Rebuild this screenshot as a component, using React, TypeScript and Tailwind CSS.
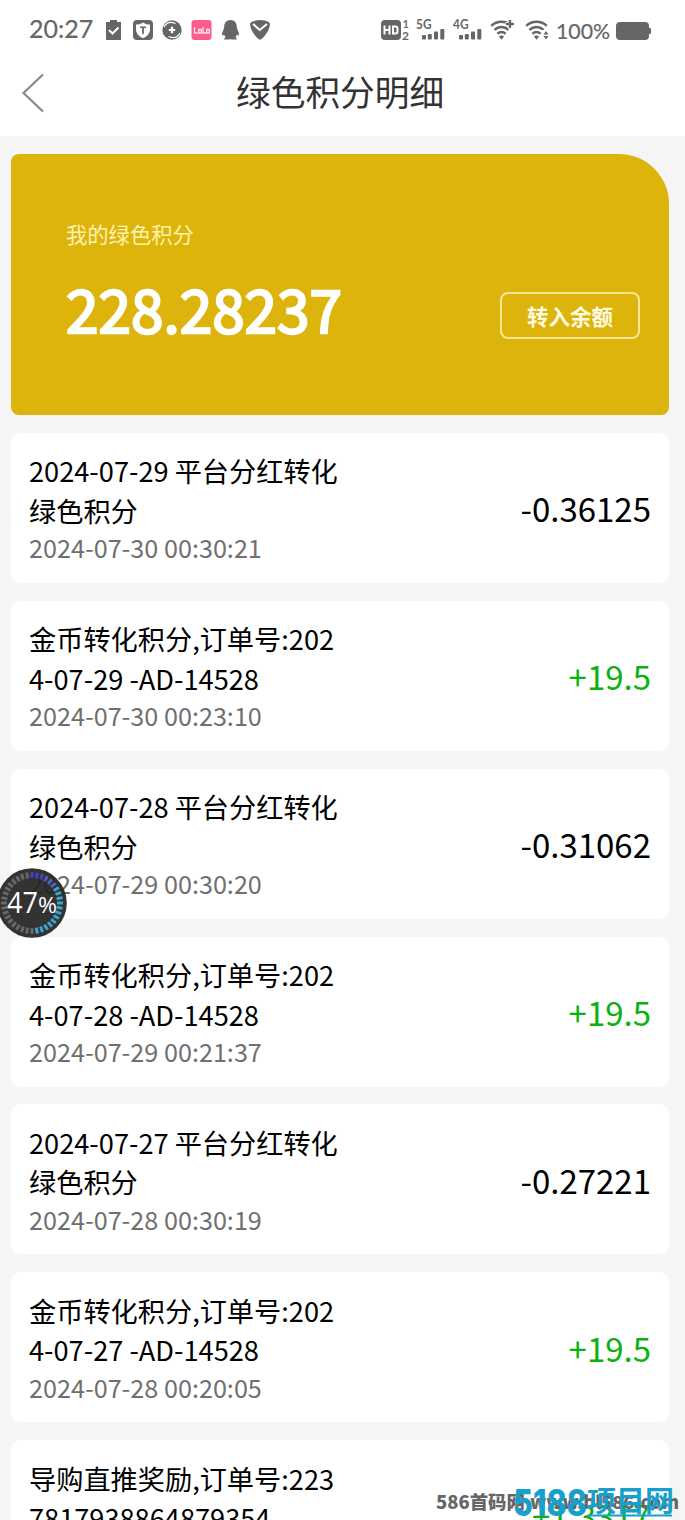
import type { ReactNode } from 'react';

interface PointsRecord {
  lines: [string, string];
  time: string;
  amount: string;
}

const records: PointsRecord[] = [
  { lines: ['2024-07-29 平台分红转化', '绿色积分'], time: '2024-07-30 00:30:21', amount: '-0.36125' },
  { lines: ['金币转化积分,订单号:202', '4-07-29 -AD-14528'], time: '2024-07-30 00:23:10', amount: '+19.5' },
  { lines: ['2024-07-28 平台分红转化', '绿色积分'], time: '2024-07-29 00:30:20', amount: '-0.31062' },
  { lines: ['金币转化积分,订单号:202', '4-07-28 -AD-14528'], time: '2024-07-29 00:21:37', amount: '+19.5' },
  { lines: ['2024-07-27 平台分红转化', '绿色积分'], time: '2024-07-28 00:30:19', amount: '-0.27221' },
  { lines: ['金币转化积分,订单号:202', '4-07-27 -AD-14528'], time: '2024-07-28 00:20:05', amount: '+19.5' },
  { lines: ['导购直推奖励,订单号:223', '7817938864879354'], time: '', amount: '+1.3317' },
];

function Signal({ label }: { label: string }) {
  return (
    <svg width="31" height="22" viewBox="0 0 31 22" fill="#666" className="overflow-visible">
      <text x="0" y="10" fontSize="12.5" fontWeight="700" className="font-['Lato']" textLength="15.5" lengthAdjust="spacingAndGlyphs">
        {label}
      </text>
      <rect x="6" y="16" width="4" height="4.5" rx="1" />
      <rect x="11.8" y="15" width="4" height="5.5" rx="1" />
      <rect x="18" y="12.5" width="4" height="8" rx="1" />
      <rect x="24.3" y="10" width="4" height="10.5" rx="1" />
    </svg>
  );
}

function Wifi({ children }: { children: ReactNode }) {
  return (
    <svg width="25" height="22" viewBox="0 0 25 22" fill="none" stroke="#666" strokeWidth="2.5">
      <path d="M1.2 6.8C7 1.4 16 1.4 21.8 6.8" />
      <path d="M4.4 10.9C8.6 7.1 14.4 7.1 18.6 10.9" />
      <path d="M7.4 14.7C10 12.5 13 12.5 15.6 14.7" />
      <path d="M8.9 17.4Q11.5 15.6 14.1 17.4L11.5 20.8Z" fill="#666" stroke="none" />
      {children}
    </svg>
  );
}

function StatusBar() {
  return (
    <div className="flex h-[60px] items-center justify-between pl-[29px] pr-[34px] text-[#666]">
      <div className="flex items-center">
        <span className="-mt-[3px] w-[76px] font-['Lato'] text-[25px] leading-none [-webkit-text-stroke:0.2px_#666]">20:27</span>
        <svg width="166" height="22" viewBox="105 19 166 22" fill="#666">
          {/* clipboard check */}
          <path d="M106 22h4v-2h7v2h4v18h-15z" />
          <path d="M109 30l3.5 3.5 6-6" fill="none" stroke="#fff" strokeWidth="2" />
          {/* shield */}
          <rect x="133" y="20" width="20" height="20" rx="4" />
          <path d="M143 22.5c2.5 1.8 5 2 7 2v5c0 4-3 7-7 8.7c-4-1.7-7-4.7-7-8.7v-5c2 0 4.5-.2 7-2z" fill="#fff" />
          <path d="M140 26.5h6v1.6h-2.1v5l-.9 2-.9-2v-5h-2.1z" />
          {/* plus with orbit */}
          <circle cx="172" cy="30" r="9.7" />
          <path d="M164 27c2.5-4.5 7-5.5 11.5-3.5M180 33c-2.5 4.5-7 5.5-11.5 3.5" fill="none" stroke="#fff" strokeWidth="1.3" />
          <path d="M172 26.8v6.4M168.8 30h6.4" stroke="#fff" strokeWidth="2.2" />
          {/* lala */}
          <rect x="191.5" y="20" width="20" height="20" rx="3" fill="#fb5c8c" />
          <path d="M194.5 27v6h3M201 29.5h-2.3v3.5h2.6v-4M203 27v6h3M209 29.5h-2.3v3.5h2.6v-4" fill="none" stroke="#ffe2ea" strokeWidth="1.3" />
          {/* penguin */}
          <path d="M230.5 20c4.3 0 6.3 3 6.3 7c0 2 1.8 4 2.2 7c.1 2-.7 2-2 .4c-.3 1.2-.9 2-1.7 2.8c1.3.7 1.7 1.3 1.4 2.3h-5.2l-1-.6-1 .6h-5.2c-.3-1 .1-1.6 1.4-2.3c-.8-.8-1.4-1.6-1.7-2.8c-1.3 1.6-2.1 1.6-2-.4c.4-3 2.2-5 2.2-7c0-4 2-7 6.3-7z" />
          {/* guard badge */}
          <path d="M260 20c3.5 0 6.5.8 9 2.3c1.5 1.2 1 3.7 0 6.2c-1.8 4.5-4.5 8-7.5 10.5c-1 .8-2 .8-3 0c-3-2.5-5.7-6-7.5-10.5c-1-2.5-1.5-5 0-6.2c2.5-1.5 5.5-2.3 9-2.3z" />
          <path d="M253 24l6.7 6 7.3-6" fill="none" stroke="#fff" strokeWidth="2" />
        </svg>
      </div>
      <div className="flex items-center">
        <svg width="29" height="22" viewBox="0 0 29 22" fill="#666" className="mr-[6px] overflow-visible">
          <rect x="0" y="1" width="20" height="20" rx="4" />
          <path d="M3.5 6.5v9M8.5 6.5v9M3.5 11h5M12 7.4h2.500q2 0 2 2v3.2q0 2-2 2h-2.5z" fill="none" stroke="#fff" strokeWidth="2" />
          <text x="21.7" y="9" fontSize="10.5" className="font-['Lato']" fontWeight="700">1</text>
          <text x="21" y="20.5" fontSize="12" className="font-['Lato']" fontWeight="700">2</text>
        </svg>
        <div className="mr-[6px]"><Signal label="5G" /></div>
        <div className="mr-[6px]"><Signal label="4G" /></div>
        <div className="mr-[10px]">
          <Wifi>
            <path d="M15.5 5h9M20 .5v9" stroke="#fff" strokeWidth="4" />
            <path d="M16 5h8M20 1v8" strokeWidth="2.3" />
          </Wifi>
        </div>
        <div className="mr-[6px]">
          <Wifi>
            <path d="M17 11h8v11h-8z" fill="#fff" stroke="none" />
            <path d="M18.5 15.5l2.5-3.5 2.5 3.5zM18.5 17l2.5 3.5 2.5-3.5z" fill="#666" stroke="none" />
          </Wifi>
        </div>
        <span className="mt-[3px] w-[60px] font-['Lato'] text-[21.3px] leading-none [-webkit-text-stroke:0.2px_#666]">100%</span>
        <svg width="35" height="18" viewBox="0 0 35 18" fill="#666" className="mt-[2px]">
          <rect x="0" y="0" width="33" height="18" rx="4" />
          <rect x="31" y="6" width="4" height="6" rx="1" />
        </svg>
      </div>
    </div>
  );
}

function RecordCard({ lines, time, amount }: PointsRecord) {
  const color = amount.startsWith('+') ? 'text-[#0db10d]' : 'text-black';

  return (
    <div className="flex h-[150px] shrink-0 items-center justify-between rounded-[9px] bg-white px-[18px]">
      <div className="h-[113px]">
        <p className="text-[27.2px] leading-[39.5px] text-black">{lines[0]}</p>
        <p className="text-[27.2px] leading-[39.5px] text-black">{lines[1]}</p>
        <p className="text-[25.2px] leading-[34px] text-[#707070]">{time}</p>
      </div>
      <span className={`pt-[2px] text-[33px] ${color}`}>{amount}</span>
    </div>
  );
}

function FloatingGauge() {
  const ticks = Array.from({ length: 36 }, (_, i) => i);

  return (
    <svg className="absolute -left-[3px] top-[868px]" width="70" height="70" viewBox="0 0 70 70">
      <circle cx="35" cy="35" r="34.8" fill="#222" fillOpacity="0.92" />
      {ticks.map((i) => (
        <rect
          key={i}
          x="33.5"
          y="4"
          width="3"
          height="6"
          fill={i > 17 ? '#686868' : i < 3 ? '#4345b8' : i < 6 ? '#4c62bc' : '#3aa6cf'}
          transform={`rotate(${i * 10} 35 35)`}
        />
      ))}
      <text x="10" y="45" fill="#fff" fontSize="28.5" textLength="31" lengthAdjust="spacingAndGlyphs" className="font-['Open_Sans']">47</text>
      <text x="41" y="45" fill="#fff" fontSize="22" textLength="19" lengthAdjust="spacingAndGlyphs" className="font-['Open_Sans']">%</text>
    </svg>
  );
}

export default function App() {
  return (
    <div className="relative h-[1520px] w-[685px] overflow-hidden bg-[#f5f5f5] font-['Noto_Sans_CJK_SC',sans-serif]">
      <header className="h-[136px] bg-white">
        <StatusBar />
        <div className="flex h-[66px] items-center">
          <svg width="24" height="40" viewBox="0 0 24 40" className="ml-[21px]" fill="none" stroke="#888" strokeWidth="2.2">
            <path d="M22 1.5L2.5 20 22 38.5" />
          </svg>
          <h1 className="-mt-1 ml-[191px] text-[34.7px] leading-none text-[#333]">绿色积分明细</h1>
        </div>
      </header>

      <main className="flex flex-col gap-[17.9px] pl-[11px] pr-4 pt-[18px]">
        <section className="flex h-[261px] shrink-0 justify-between rounded-[8px] rounded-tr-[50px] bg-[#ddb40b] pl-[55px] pr-[29px]">
          <div className="pt-[64px]">
            <p className="text-[21.3px] leading-[32px] text-[#fff2ac]">我的绿色积分</p>
            <p className="mt-[16px] text-[58.5px] leading-[84px] text-white [-webkit-text-stroke:2.3px_#fff]">228.28237</p>
          </div>
          <button className="mt-[138px] h-[47px] w-[140px] rounded-[8px] border-2 border-[#fbe698] pt-px text-[21.5px] font-bold text-[#fffbe2]">
            转入余额
          </button>
        </section>
        {records.map((record) => (
          <RecordCard key={record.lines.join()} {...record} />
        ))}
      </main>

      <FloatingGauge />

      {/* Site marks over the list */}
      <svg className="absolute left-[430px] top-[1475px]" width="255" height="45" viewBox="0 0 255 45">
        <g fill="#666" fontSize="18" fontWeight="900">
          <text x="6" y="34" textLength="89" lengthAdjust="spacingAndGlyphs">586首码网</text>
          <text x="100" y="34" textLength="149" lengthAdjust="spacingAndGlyphs">www.bl586.com</text>
        </g>
        <g fill="#18a0cc">
          <text x="83" y="41" fontSize="37.5" fontWeight="800" textLength="74" lengthAdjust="spacingAndGlyphs" className="font-['Inter']">5188</text>
          <text x="157" y="37" fontSize="29" fontWeight="700" textLength="87" lengthAdjust="spacingAndGlyphs">项目网</text>
        </g>
        <path d="M158 40.5h84" stroke="#18a0cc" strokeWidth="2" />
      </svg>
    </div>
  );
}
